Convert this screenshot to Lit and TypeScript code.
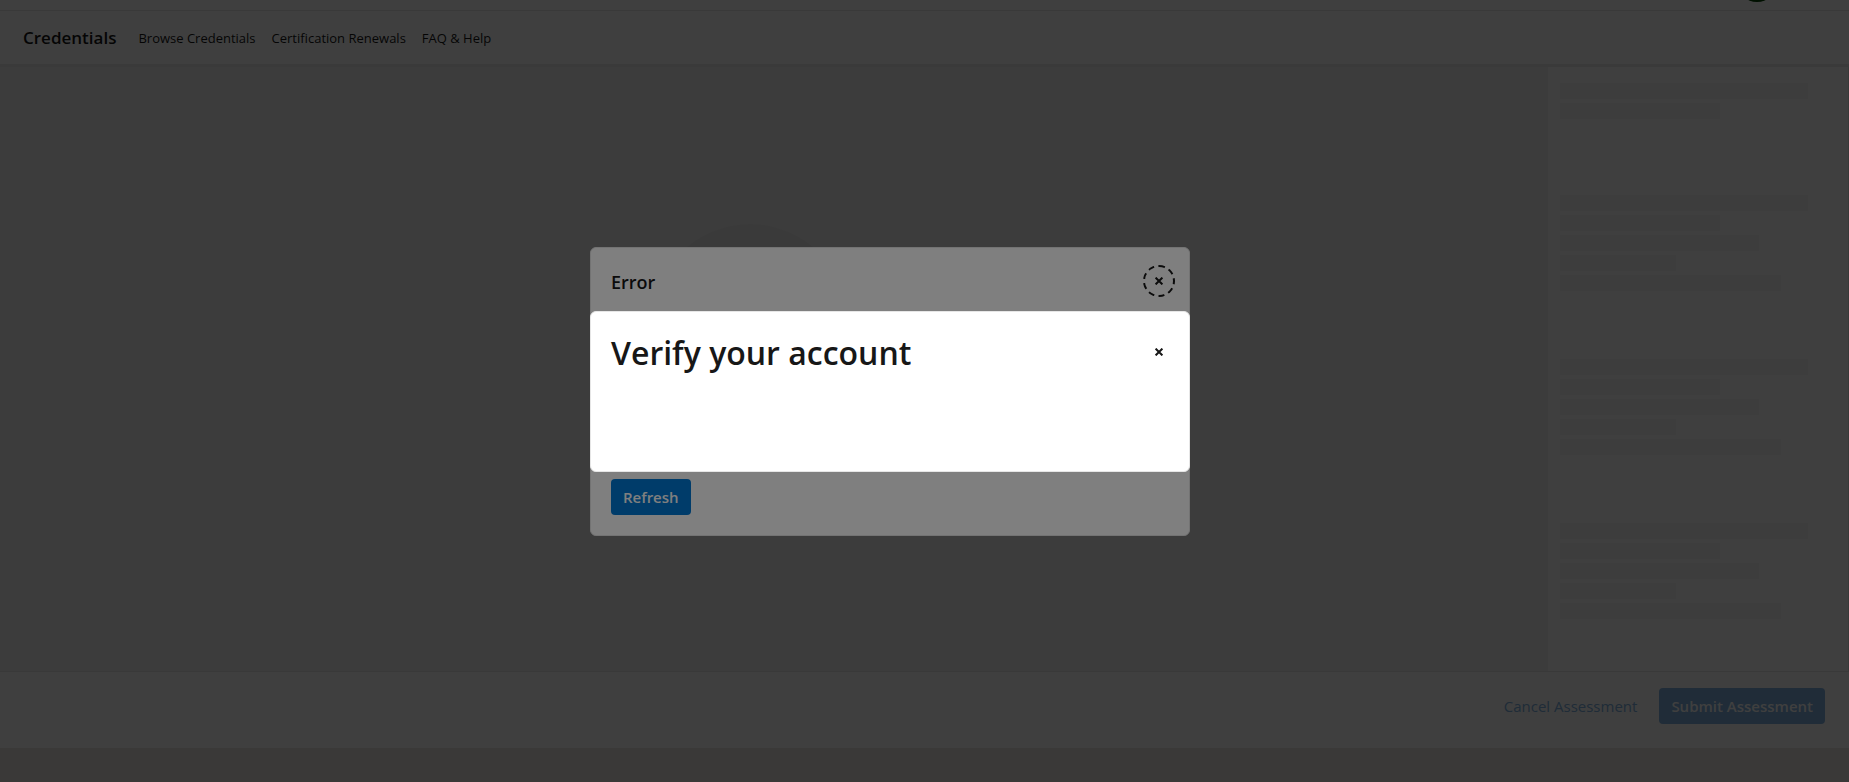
import { LitElement, html, css, svg } from "lit";
import { customElement, property } from "lit/decorators.js";
import { styleMap } from "lit/directives/style-map.js";

const closeIcon = html`<svg viewBox="0 0 8 8" width="8" height="8" aria-hidden="true">
  ${svg`<path d="M0.6 0.6L7.4 7.4M7.4 0.6L0.6 7.4" stroke="currentColor" stroke-width="2" fill="none" />`}
</svg>`;

/** Placeholder lines shown while sidebar text loads. */
@customElement("skeleton-lines")
export class SkeletonLines extends LitElement {
  @property({ type: Array }) widths: number[] = [];

  static styles = css`
    :host {
      display: flex;
      flex-direction: column;
      gap: 4px;
    }
    .line {
      height: 16px;
      background: #f5f5f5;
    }
  `;

  render() {
    return this.widths.map(
      (w) => html`<div class="line" style=${styleMap({ width: `${w}%` })}></div>`
    );
  }
}

@customElement("app-root")
export class AppRoot extends LitElement {
  static styles = css`
    :host {
      display: block;
      font-family: "Open Sans", "Noto Sans", sans-serif;
      color: #171717;
      --line: #e6e6e6;
      --accent: #0078d4;
      --accent-muted: #80b0e0;
    }
    * {
      box-sizing: border-box;
    }
    button {
      font: inherit;
      border: 0;
      cursor: pointer;
    }
    .page {
      min-height: 100vh;
      display: flex;
      flex-direction: column;
      background: #fff;
    }
    .topbar {
      height: 11px;
      display: flex;
      justify-content: flex-end;
      align-items: flex-end;
      padding-right: 72px;
      overflow: hidden;
      border-bottom: 1px solid var(--line);
    }
    .avatar {
      flex: none;
      width: 40px;
      height: 40px;
      margin-bottom: 8px;
      border-radius: 50%;
      background: #004000;
    }
    .header {
      height: 56px;
      display: flex;
      align-items: center;
      gap: 22px;
      padding: 0 23px;
      border-bottom: 3px solid #e9e9e9;
    }
    .brand {
      font-size: 17px;
      line-height: 24px;
      font-weight: 600;
      color: inherit;
      text-decoration: none;
    }
    .links {
      display: flex;
      gap: 16px;
    }
    .links a {
      font-size: 13px;
      line-height: 20px;
      color: inherit;
      text-decoration: none;
    }
    .content {
      flex: 1;
      display: flex;
    }
    .stage {
      flex: 1;
      display: flex;
      justify-content: center;
      align-items: flex-start;
      padding: 157px 48px 0 0;
      background: #f2f2f2;
    }
    .disc {
      width: 196px;
      height: 196px;
      border-radius: 50%;
      background: #ebebeb;
    }
    .side {
      width: 301px;
      padding: 16px 12px;
      display: flex;
      flex-direction: column;
      gap: 68px;
      border-right: 1px solid var(--line);
    }
    .intro {
      padding-bottom: 8px;
    }
    .footer {
      display: flex;
      justify-content: flex-end;
      gap: 10px;
      padding: 16px 24px 24px;
      border-top: 1px solid var(--line);
    }
    .btn {
      height: 36px;
      padding: 0 12px;
      border-radius: 4px;
      font-size: 15px;
      line-height: 20px;
      font-weight: 600;
      background: var(--accent);
      color: #fff;
    }
    .btn.muted {
      background: var(--accent-muted);
    }
    .btn.plain {
      background: none;
      color: var(--accent-muted);
      font-weight: 400;
    }
    .base {
      height: 34px;
      background: #eae6e2;
    }
    .layer {
      position: fixed;
      inset: 0;
      display: flex;
      align-items: center;
      justify-content: center;
      padding-right: 69px;
      background: rgba(0, 0, 0, 0.5);
    }
    .modal {
      width: 600px;
      max-width: 100%;
      padding: 16px 20px 20px;
      border: 1px solid var(--line);
      border-radius: 6px;
      background: #fff;
    }
    .head {
      display: flex;
      justify-content: space-between;
      align-items: flex-start;
      margin-right: -6px;
    }
    .title {
      margin: 0;
      font-size: 18px;
      line-height: 36px;
      font-weight: 600;
    }
    .title.large {
      font-size: 32px;
      line-height: 50px;
    }
    .close {
      width: 32px;
      height: 32px;
      margin-top: 1px;
      padding: 0;
      display: grid;
      place-items: center;
      border-radius: 50%;
      background: none;
      color: inherit;
    }
    .title.large + .close {
      margin-top: 8px;
    }
    .close.focused {
      outline: 2px dashed #171717;
      outline-offset: -2px;
    }
    .error-body {
      height: 179px;
    }
    .verify-body {
      height: 73px;
    }
  `;

  render() {
    const full = [90, 58, 72, 42, 80];
    return html`
      <div class="page">
        <div class="topbar"><div class="avatar"></div></div>
        <header class="header">
          <a class="brand" href="#">Credentials</a>
          <nav class="links">
            <a href="#">Browse Credentials</a>
            <a href="#">Certification Renewals</a>
            <a href="#">FAQ &amp; Help</a>
          </nav>
        </header>
        <main class="content">
          <section class="stage"><div class="disc"></div></section>
          <aside class="side">
            <skeleton-lines class="intro" .widths=${[90, 58]}></skeleton-lines>
            ${[0, 1, 2].map(() => html`<skeleton-lines .widths=${full}></skeleton-lines>`)}
          </aside>
        </main>
        <footer class="footer">
          <button class="btn plain">Cancel Assessment</button>
          <button class="btn muted">Submit Assessment</button>
        </footer>
        <div class="base"></div>
      </div>

      <div class="layer">
        <section class="modal" role="dialog" aria-labelledby="error-title">
          <div class="head">
            <h2 class="title" id="error-title">Error</h2>
            <button class="close focused" aria-label="Close">${closeIcon}</button>
          </div>
          <div class="error-body"></div>
          <button class="btn">Refresh</button>
        </section>
      </div>

      <div class="layer">
        <section class="modal" role="dialog" aria-modal="true" aria-labelledby="verify-title">
          <div class="head">
            <h1 class="title large" id="verify-title">Verify your account</h1>
            <button class="close" aria-label="Close">${closeIcon}</button>
          </div>
          <div class="verify-body"></div>
        </section>
      </div>
    `;
  }
}
